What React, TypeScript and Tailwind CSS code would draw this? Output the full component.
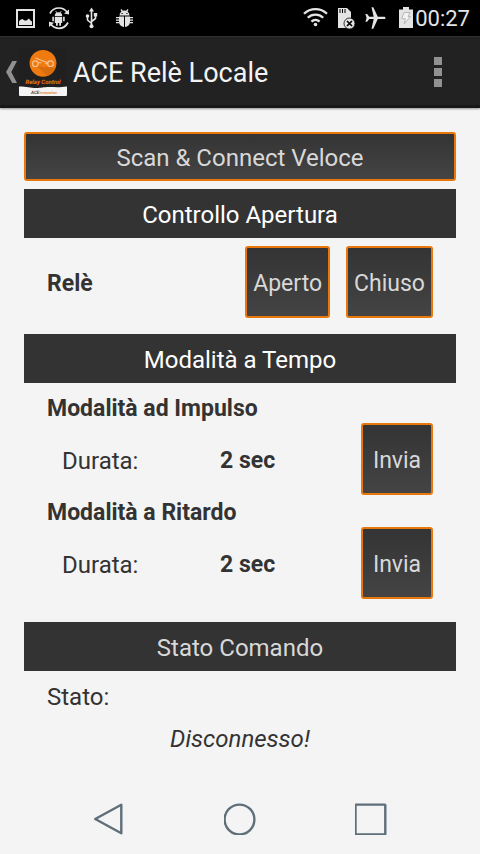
import React, { useState } from "react";

const buttonStyle =
	"rounded-[3px] border-2 border-[#e8780c] bg-linear-to-b from-[#343434] to-[#444444] pt-[3px] text-[#d8d8d8] text-center active:from-[#e8780c] active:to-[#e8780c]";

function StatusBar() {
	return (
		<div className="flex h-9 items-center justify-between bg-black pl-3.5 pr-2.5 text-[#e4e4e4]">
			<div className="flex items-center gap-[9px]">
				{/* Screenshot saved */}
				<svg width="24" height="24" viewBox="0 0 24 24">
					<rect x="3" y="4" width="17" height="17" fill="none" stroke="currentColor" strokeWidth="2" />
					<path d="M5 19v-3.500l1-1.500 2.500-1 2 1.500h2l2.500-2 1.500 2 1.500 1v3.500z" fill="currentColor" />
				</svg>
				{/* Android sync */}
				<svg width="24" height="24" viewBox="0 0 24 24" fill="none" stroke="currentColor">
					<path d="M3 7.500C5 3.500 8.500 2 12 2c3.500 0 6.500 1.600 8.600 5M21 16.500c-2 4-5.500 5.800-9.200 5.800-3.500 0-6.500-1.600-8.600-5" strokeWidth="1.700" />
					<path d="M22 3.500v5l-5-1zM2 21v-5.200l5 1z" fill="currentColor" stroke="none" />
					<path d="M7.800 10a3.700 3.700 0 0 1 7.400 0zM7.800 10.800h7.400V17H7.800zM5.300 10.800h1.600v4.500H5.300zM16.100 10.800h1.600v4.500h-1.600zM9 17h1.800v2.700H9zM12.200 17H14v2.700h-1.800z" fill="currentColor" stroke="none" />
					<path d="M8.700 5l1.300 2M14.300 5L13 7" strokeWidth=".8" />
				</svg>
				{/* USB */}
				<svg width="24" height="24" viewBox="0 0 24 24" fill="none" stroke="currentColor" strokeWidth="1.600">
					<path d="M11.500 4v16M11.500 17.500L7.500 14v-3M11.500 15.500l4-3V9" />
					<path d="M11.500 1.500L14 5.500H9zM13.800 7h3.400v3.400h-3.400z" fill="currentColor" stroke="none" />
					<circle cx="7.500" cy="10" r="1.800" fill="currentColor" stroke="none" />
					<circle cx="11.500" cy="20.200" r="2" fill="currentColor" stroke="none" />
				</svg>
				{/* USB debugging */}
				<svg width="24" height="24" viewBox="0 0 24 24" fill="currentColor">
					<path d="M6.500 9.500a5 5 0 0 1 10 0zM6 10.500h5V21a5.200 5.200 0 0 1-5-5zM12 10.500h5V16a5.200 5.200 0 0 1-5 5z" />
					<path d="M8 3.500l1.800 2.500M15 3.500L13.200 6M3 11.700h3M3 14.200h3M3 16.700h3M17 11.700h3M17 14.200h3M17 16.700h3" stroke="currentColor" strokeWidth="1.300" />
					<path d="M8.500 7.500h1.200M13.300 7.500h1.200" stroke="#000" />
				</svg>
			</div>

			<div className="flex items-center">
				<div className="flex items-center gap-1">
					{/* Wifi */}
					<svg width="26" height="24" viewBox="0 0 26 24" fill="none" stroke="currentColor" strokeWidth="2.300">
						<path d="M1 7.800a16.500 16.500 0 0 1 23 0M4.800 11.800a11 11 0 0 1 15.400 0M8.400 15.600a6 6 0 0 1 8.200 0" />
						<circle cx="12.500" cy="18.500" r="1.800" fill="currentColor" stroke="none" />
					</svg>
					{/* SD card missing */}
					<svg width="26" height="24" viewBox="0 0 26 24">
						<path d="M5 2h9l4 4v16H5z" fill="currentColor" />
						<path d="M7 3v4M9.500 3v4M12 3v4" stroke="#000" />
						<circle cx="16.500" cy="17.500" r="5.500" fill="currentColor" stroke="#000" strokeWidth=".8" />
						<path d="M14 15l5 5M19 15l-5 5" stroke="#000" strokeWidth="1.700" />
					</svg>
					{/* Airplane mode */}
					<svg width="26" height="24" viewBox="0 0 26 24" fill="currentColor">
						<path d="M22.500 11.900c0 .8-.8 1.200-1.800 1.200h-5.900l-4.500 9.700H8.500l2.200-9.700H6.300l-2.200 2.700H2.400l1.200-3.900L2.400 8h1.700l2.200 2.700h4.400L8.500 1.200h1.800l4.500 9.500h5.900c1 0 1.800.4 1.800 1.200z" />
					</svg>
					{/* Battery */}
					<svg width="20" height="24" viewBox="0 0 20 24">
						<path d="M6 3.500h4V1h6v2.500h4V22H6z" fill="currentColor" />
						<path d="M11 6.500h6l-2 4h2.300l-6 7.500 1-5.300H8.700z" fill="#f3f3f3" stroke="#aaa" strokeWidth=".8" />
					</svg>
				</div>
				<span className="ml-0.5 pt-0.5 text-[22px] leading-8">00:27</span>
			</div>
		</div>
	);
}

function AppLogo() {
	return (
		<svg width="48" height="48" viewBox="0 0 48 48">
			<rect width="48" height="40" fill="#202020" />
			<circle cx="24" cy="15.300" r="13.400" fill="#ee7a10" />
			<path d="M18 18l10 10a13.400 13.400 0 0 0 8-7l-4-3.500-6 2z" fill="#d96c0b" />
			<g fill="none" stroke="#f8c79a" strokeWidth="1.100">
				<circle cx="16.300" cy="15.700" r="2.800" />
				<circle cx="31.500" cy="15.700" r="2.800" />
				<path d="M16.500 10l12.300 4.700M19 14.700h3.500M26 15.700h2.700" />
			</g>
			<text x="24" y="36" textAnchor="middle" textRendering="geometricPrecision" fontSize="6" fontWeight="700" fontStyle="italic" fill="#e8780c">
				Relay Control
			</text>
			<path d="M0 38.500c8 .2 11 1.500 17 1.500s7-1 13-1 10 .6 18-.5V47a1 1 0 0 1-1 1H1a1 1 0 0 1-1-1z" fill="#f4f4f4" />
			<text x="12" y="46" textRendering="geometricPrecision" fontSize="4.500" fontWeight="700" fontStyle="italic" fill="#444">
				ACE<tspan fill="#f08a30" dx=".4" fontSize="3.800">innovation</tspan>
			</text>
		</svg>
	);
}

function ActionBar() {
	return (
		<header className="flex h-[72px] items-center justify-between border-t border-b-3 border-t-[#303030] border-b-[#181818] bg-[#222222] pt-0.5 pl-1.5 pr-[38px] shadow-[0_1px_2px_rgba(0,0,0,0.4)]">
			<div className="flex items-center">
				<button aria-label="Indietro" className="flex items-center gap-0.5">
					<svg width="11" height="24" viewBox="0 0 11 24">
						<path d="M6.300 1H11L5.300 12 11 23H6.300L0 12z" fill="#919191" />
					</svg>
					<AppLogo />
				</button>
				<h1 className="ml-1.5 pt-0.5 text-[27px] leading-8 text-[#f3f3f3]">ACE Relè Locale</h1>
			</div>
			<button aria-label="Altre opzioni" className="flex flex-col gap-[3px]">
				<span className="size-2 bg-[#919191]" />
				<span className="size-2 bg-[#919191]" />
				<span className="size-2 bg-[#919191]" />
			</button>
		</header>
	);
}

function SectionTitle({ children, className = "text-white" }: { children: React.ReactNode; className?: string }) {
	return <h2 className={`bg-[#333333] pt-[3px] text-center leading-[46px] ${className}`}>{children}</h2>;
}

function TimedMode({ title, seconds, onSend }: { title: string; seconds: number; onSend: () => void }) {
	return (
		<div>
			<h3 className="pt-2 pb-1 text-[23px] font-bold leading-7">{title}</h3>
			<div className="flex h-16 items-center">
				<span className="w-[158px] pt-[3px] pl-[15px]">Durata:</span>
				<span className="flex-1 pt-[3px] pl-[15px] text-[23px] font-bold">{seconds} sec</span>
				<button onClick={onSend} className={`${buttonStyle} size-[72px] text-[23px]`}>
					Invia
				</button>
			</div>
		</div>
	);
}

export default function App() {
	const [status, setStatus] = useState("Disconnesso!");
	const send = () => setStatus("Disconnesso!");

	return (
		<div className="flex min-h-screen flex-col bg-[#f4f4f4] font-[Roboto,sans-serif] text-2xl leading-7 text-[#333333]">
			<StatusBar />
			<ActionBar />

			<main className="flex-1 px-6 pt-6">
				<button onClick={send} className={`${buttonStyle} mb-2 block h-[49px] w-full`}>
					Scan &amp; Connect Veloce
				</button>

				<SectionTitle>Controllo Apertura</SectionTitle>
				<div className="flex items-center gap-4 px-[23px] pt-2 pb-4 text-[23px]">
					<span className="flex-1 pt-[3px] font-bold">Relè</span>
					<button onClick={send} className={`${buttonStyle} h-[72px] px-1.5`}>
						Aperto
					</button>
					<button onClick={send} className={`${buttonStyle} h-[72px] px-1.5`}>
						Chiuso
					</button>
				</div>

				<SectionTitle>Modalità a Tempo</SectionTitle>
				<div className="px-[23px] pt-1 pb-[27px]">
					<TimedMode title="Modalità ad Impulso" seconds={2} onSend={send} />
					<TimedMode title="Modalità a Ritardo" seconds={2} onSend={send} />
				</div>

				<SectionTitle className="text-[#d8d8d8]">Stato Comando</SectionTitle>
				<div className="px-[23px] pt-3">
					<p>Stato:</p>
					<p className="pt-3.5 text-center italic">{status}</p>
				</div>
			</main>

			<nav className="flex h-[70px] items-center px-[43px]">
				<button aria-label="Back" className="flex flex-1 justify-center">
					<svg width="32" height="32" viewBox="0 0 32 32" fill="none" stroke="#5f6f79" strokeWidth="2.400">
						<path d="M28.300 1.800v28.400L2.200 16z" strokeLinejoin="round" />
					</svg>
				</button>
				<button aria-label="Home" className="flex flex-1 justify-center">
					<svg width="32" height="32" viewBox="0 0 32 32" fill="none" stroke="#5f6f79" strokeWidth="2.400">
						<circle cx="15.500" cy="16.500" r="14.900" />
					</svg>
				</button>
				<button aria-label="Recenti" className="flex flex-1 justify-center">
					<svg width="32" height="32" viewBox="0 0 32 32" fill="none" stroke="#5f6f79" strokeWidth="2.400">
						<rect x=".5" y="1.600" width="29.800" height="29.800" rx=".5" />
					</svg>
				</button>
			</nav>
		</div>
	);
}
